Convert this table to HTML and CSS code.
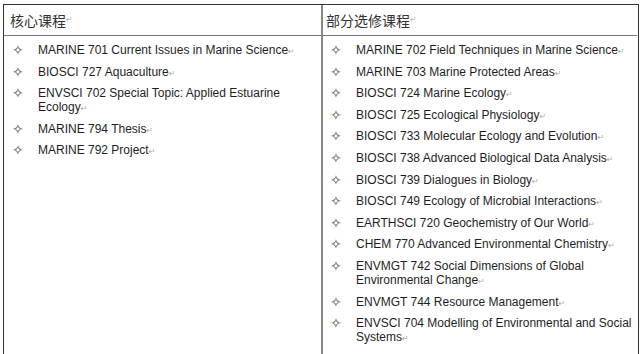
FILE: index.html
```html
<!DOCTYPE html>
<html lang="zh">
<head>
<meta charset="utf-8">
<link rel="stylesheet" href="styles.css">
</head>
<body>
<div class="table">
  <div class="head first">核心课程<span class="pm">↵</span></div>
  <div class="head second">部分选修课程<span class="pm">↵</span></div>
  <div class="cell first">
    <ul class="list">
      <li><span class="mk">✧</span><span class="tx">MARINE 701 Current Issues in Marine Science<span class="pm">↵</span></span></li>
      <li><span class="mk">✧</span><span class="tx">BIOSCI 727 Aquaculture<span class="pm">↵</span></span></li>
      <li><span class="mk">✧</span><span class="tx">ENVSCI 702 Special Topic: Applied Estuarine Ecology<span class="pm">↵</span></span></li>
      <li><span class="mk">✧</span><span class="tx">MARINE 794 Thesis<span class="pm">↵</span></span></li>
      <li><span class="mk">✧</span><span class="tx">MARINE 792 Project<span class="pm">↵</span></span></li>
    </ul>
  </div>
  <div class="cell second">
    <ul class="list">
      <li><span class="mk">✧</span><span class="tx">MARINE 702 Field Techniques in Marine Science<span class="pm">↵</span></span></li>
      <li><span class="mk">✧</span><span class="tx">MARINE 703 Marine Protected Areas<span class="pm">↵</span></span></li>
      <li><span class="mk">✧</span><span class="tx">BIOSCI 724 Marine Ecology<span class="pm">↵</span></span></li>
      <li><span class="mk">✧</span><span class="tx">BIOSCI 725 Ecological Physiology<span class="pm">↵</span></span></li>
      <li><span class="mk">✧</span><span class="tx">BIOSCI 733 Molecular Ecology and Evolution<span class="pm">↵</span></span></li>
      <li><span class="mk">✧</span><span class="tx">BIOSCI 738 Advanced Biological Data Analysis<span class="pm">↵</span></span></li>
      <li><span class="mk">✧</span><span class="tx">BIOSCI 739 Dialogues in Biology<span class="pm">↵</span></span></li>
      <li><span class="mk">✧</span><span class="tx">BIOSCI 749 Ecology of Microbial Interactions<span class="pm">↵</span></span></li>
      <li><span class="mk">✧</span><span class="tx">EARTHSCI 720 Geochemistry of Our World<span class="pm">↵</span></span></li>
      <li><span class="mk">✧</span><span class="tx">CHEM 770 Advanced Environmental Chemistry<span class="pm">↵</span></span></li>
      <li><span class="mk">✧</span><span class="tx">ENVMGT 742 Social Dimensions of Global Environmental Change<span class="pm">↵</span></span></li>
      <li><span class="mk">✧</span><span class="tx">ENVMGT 744 Resource Management<span class="pm">↵</span></span></li>
      <li><span class="mk">✧</span><span class="tx">ENVSCI 704 Modelling of Environmental and Social Systems<span class="pm">↵</span></span></li>
      <li><span class="mk">✧</span><span class="tx">FOODSCI 700 Advanced Food Science<span class="pm">↵</span></span></li>
    </ul>
  </div>
</div>
</body>
</html>
```
FILE: styles.css
```css
html, body {
  margin: 0;
  padding: 0;
  background: #fff;
  overflow: hidden;
}
body {
  width: 640px;
  height: 354px;
  padding: 4px 0 0 3px;
  box-sizing: border-box;
  font-family: "Liberation Sans", Arial, "Noto Sans CJK SC", sans-serif;
  color: #1e1e1e;
}
.table {
  width: 634px;
  display: grid;
  grid-template-columns: 319px 314px;
  border: 1px solid #333;
  border-bottom: none;
}
.head {
  height: 30px;
  display: flex;
  align-items: center;
  font-family: "Noto Sans CJK SC", sans-serif;
  font-size: 14px;
  color: #333;
  border-bottom: 1px solid #777;
}
.head.first {
  padding-left: 6px;
  border-right: 2px solid #888;
}
.head.second {
  padding-left: 3px;
}
.cell.first {
  border-right: 2px solid #888;
  height: 340px;
}
.list {
  list-style: none;
  margin: 0;
  padding: 7px 0 0 0;
}
.list li {
  display: flex;
  font-size: 12px;
  line-height: 14px;
  margin-bottom: 7.6px;
}
.cell.first .list li {
  padding-left: 8px;
}
.cell.second .list li {
  padding-left: 7px;
}
.mk {
  flex: 0 0 26px;
  color: #555;
  font-family: "DejaVu Sans", sans-serif;
  font-size: 14px;
  line-height: 14px;
}
.tx {
  flex: 1;
  padding-right: 2px;
  line-height: 14px;
}
.pm {
  color: #aaa;
  font-size: 8px;
  line-height: 0;
  font-family: "DejaVu Sans", sans-serif;
}
```
